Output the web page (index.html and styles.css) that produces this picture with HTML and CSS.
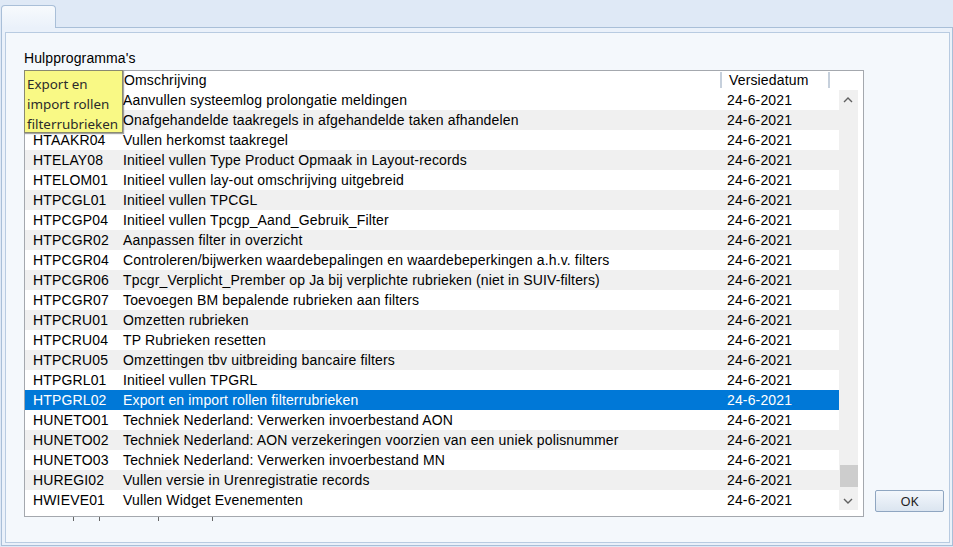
FILE: index.html
```html
<!DOCTYPE html>
<html>
<head>
<meta charset="utf-8">
<link rel="stylesheet" href="styles.css">
</head>
<body>
<div class="tabstrip"><div class="tab"></div></div>
<div class="frame">
  <div class="panel">
    <div class="label">Hulpprogramma's</div>
    <div class="content">
      <div class="gridwrap">
        <div class="grid">
          <div class="header">
            <div class="c-code"></div>
            <div class="c-desc h-desc">Omschrijving</div>
            <div class="c-date h-date">Versiedatum</div>
            <div class="h-rest"></div>
          </div>
          <div class="body">
            <div class="rows">
              <div class="row"><span class="c-code"></span><span class="c-desc">Aanvullen systeemlog prolongatie meldingen</span><span class="c-date">24-6-2021</span></div>
              <div class="row"><span class="c-code"></span><span class="c-desc">Onafgehandelde taakregels in afgehandelde taken afhandelen</span><span class="c-date">24-6-2021</span></div>
              <div class="row"><span class="c-code">HTAAKR04</span><span class="c-desc">Vullen herkomst taakregel</span><span class="c-date">24-6-2021</span></div>
              <div class="row"><span class="c-code">HTELAY08</span><span class="c-desc">Initieel vullen Type Product Opmaak in Layout-records</span><span class="c-date">24-6-2021</span></div>
              <div class="row"><span class="c-code">HTELOM01</span><span class="c-desc">Initieel vullen lay-out omschrijving uitgebreid</span><span class="c-date">24-6-2021</span></div>
              <div class="row"><span class="c-code">HTPCGL01</span><span class="c-desc">Initieel vullen TPCGL</span><span class="c-date">24-6-2021</span></div>
              <div class="row"><span class="c-code">HTPCGP04</span><span class="c-desc">Initieel vullen Tpcgp_Aand_Gebruik_Filter</span><span class="c-date">24-6-2021</span></div>
              <div class="row"><span class="c-code">HTPCGR02</span><span class="c-desc">Aanpassen filter in overzicht</span><span class="c-date">24-6-2021</span></div>
              <div class="row"><span class="c-code">HTPCGR04</span><span class="c-desc">Controleren/bijwerken waardebepalingen en waardebeperkingen a.h.v. filters</span><span class="c-date">24-6-2021</span></div>
              <div class="row"><span class="c-code">HTPCGR06</span><span class="c-desc">Tpcgr_Verplicht_Prember op Ja bij verplichte rubrieken (niet in SUIV-filters)</span><span class="c-date">24-6-2021</span></div>
              <div class="row"><span class="c-code">HTPCGR07</span><span class="c-desc">Toevoegen BM bepalende rubrieken aan filters</span><span class="c-date">24-6-2021</span></div>
              <div class="row"><span class="c-code">HTPCRU01</span><span class="c-desc">Omzetten rubrieken</span><span class="c-date">24-6-2021</span></div>
              <div class="row"><span class="c-code">HTPCRU04</span><span class="c-desc">TP Rubrieken resetten</span><span class="c-date">24-6-2021</span></div>
              <div class="row"><span class="c-code">HTPCRU05</span><span class="c-desc">Omzettingen tbv uitbreiding bancaire filters</span><span class="c-date">24-6-2021</span></div>
              <div class="row"><span class="c-code">HTPGRL01</span><span class="c-desc">Initieel vullen TPGRL</span><span class="c-date">24-6-2021</span></div>
              <div class="row selected"><span class="c-code">HTPGRL02</span><span class="c-desc">Export en import rollen filterrubrieken</span><span class="c-date">24-6-2021</span></div>
              <div class="row"><span class="c-code">HUNETO01</span><span class="c-desc">Techniek Nederland: Verwerken invoerbestand AON</span><span class="c-date">24-6-2021</span></div>
              <div class="row"><span class="c-code">HUNETO02</span><span class="c-desc">Techniek Nederland: AON verzekeringen voorzien van een uniek polisnummer</span><span class="c-date">24-6-2021</span></div>
              <div class="row"><span class="c-code">HUNETO03</span><span class="c-desc">Techniek Nederland: Verwerken invoerbestand MN</span><span class="c-date">24-6-2021</span></div>
              <div class="row"><span class="c-code">HUREGI02</span><span class="c-desc">Vullen versie in Urenregistratie records</span><span class="c-date">24-6-2021</span></div>
              <div class="row"><span class="c-code">HWIEVE01</span><span class="c-desc">Vullen Widget Evenementen</span><span class="c-date">24-6-2021</span></div>
            </div>
            <div class="scrollbar">
              <div class="arrow">
                <svg width="10" height="6" viewBox="0 0 10 6"><path d="M1 5 L5 1 L9 5" fill="none" stroke="#606060" stroke-width="1.4"/></svg>
              </div>
              <div class="track"><div class="thumb"></div></div>
              <div class="arrow">
                <svg width="10" height="6" viewBox="0 0 10 6"><path d="M1 1 L5 5 L9 1" fill="none" stroke="#606060" stroke-width="1.4"/></svg>
              </div>
            </div>
          </div>
        </div>
        <div class="ticks"><i class="t1"></i><i class="t2"></i><i class="t3"></i><i class="t4"></i></div>
        <div class="tooltip">Export en<br>import rollen<br>filterrubrieken</div>
      </div>
      <div class="side">
        <button class="ok">OK</button>
      </div>
    </div>
  </div>
</div>
</body>
</html>
```
FILE: styles.css
```css
html, body {
  margin: 0;
  padding: 0;
}
body {
  width: 953px;
  height: 547px;
  overflow: hidden;
  background: #dfe9f6;
  font-family: "Liberation Sans", Arial, sans-serif;
  font-size: 14px;
  color: #000;
}
.tabstrip {
  height: 27px;
  box-sizing: border-box;
  padding: 4px 0 0 1px;
  display: flex;
  align-items: flex-end;
}
.tab {
  position: relative;
  z-index: 1;
  width: 55px;
  height: 23px;
  box-sizing: border-box;
  border: 1px solid #a9bfd8;
  border-bottom: none;
  border-radius: 4px 4px 0 0;
  background: linear-gradient(#f7fafd, #eaf1fa);
  margin-bottom: -1px;
}
.frame {
  margin-left: 1px;
  width: 952px;
  height: 519px;
  box-sizing: border-box;
  border: 1px solid #a9bfd8;
  background: #eaf1fa;
  padding: 4px 2px 2px 3px;
}
.panel {
  height: 100%;
  box-sizing: border-box;
  border: 1px solid #b8cbe1;
  background: #f4f8fc;
  padding: 17px 0 0 18px;
}
.label {
  line-height: 16px;
  height: 16px;
  margin-bottom: 4px;
  color: #000;
  letter-spacing: 0.1px;
}
.content {
  display: flex;
  align-items: flex-end;
}
.gridwrap {
  position: relative;
  width: 840px;
}
.grid {
  width: 840px;
  height: 447px;
  box-sizing: border-box;
  border: 1px solid #a4a8ae;
  background: #fff;
  letter-spacing: 0.15px;
}
.header {
  display: flex;
  height: 19px;
  line-height: 19px;
  background: #fff;
}
.header .c-code { width: 94px; }
.h-desc { width: 596px; padding-left: 5px; }
.h-date {
  width: 99px;
  padding-left: 7px;
  border-left: 2px solid #c6d0dc;
  border-right: 2px solid #c6d0dc;
  margin: 1px 0 2px;
  line-height: 17px;
}
.body {
  display: flex;
  height: 420px;
}
.rows {
  width: 814px;
}
.row {
  display: flex;
  height: 20px;
  line-height: 21px;
  overflow: hidden;
  white-space: nowrap;
  background: #fff;
}
.row:nth-child(even) {
  background: #f0f0f0;
}
.row.selected {
  background: #0078d7;
  color: #fff;
}
.row .c-code { width: 86px; padding-left: 8px; flex: none; }
.row .c-desc { width: 597px; padding-left: 4px; overflow: hidden; flex: none; }
.row .c-date { padding-left: 7px; }
.scrollbar {
  width: 19px;
  display: flex;
  flex-direction: column;
  background: #f0f0f0;
}
.arrow {
  height: 19px;
  display: flex;
  align-items: center;
  justify-content: center;
  padding-right: 1px;
}
.track {
  flex: 1;
  display: flex;
  flex-direction: column;
  justify-content: flex-end;
  padding: 0 0 4px 1px;
}
.thumb {
  height: 22px;
  background: #cdcdcd;
}
.ticks {
  display: flex;
  height: 5px;
}
.ticks i {
  display: block;
  width: 1px;
  height: 4px;
  background: #666;
}
.ticks .t1 { margin-left: 49px; }
.ticks .t2 { margin-left: 25px; }
.ticks .t3 { margin-left: 58px; }
.ticks .t4 { margin-left: 53px; }
.tooltip {
  position: absolute;
  left: 0;
  top: 0;
  width: 99px;
  height: 63px;
  box-sizing: border-box;
  border: 1px solid #8a8a70;
  background: #f9f985;
  box-shadow: 1px 1px 1px rgba(0, 0, 0, 0.35);
  padding: 3px 0 0 2px;
  font-family: "Noto Sans", "Open Sans", sans-serif;
  font-size: 13.4px;
  line-height: 20px;
  color: #2b2b2b;
  white-space: nowrap;
}
.side {
  margin-left: 11px;
  padding-bottom: 10px;
}
.ok {
  display: block;
  width: 69px;
  height: 22px;
  box-sizing: border-box;
  border: 1px solid #8fa6c1;
  border-radius: 2px;
  background: linear-gradient(#f3f7fc, #dbe5f0);
  font-family: "Noto Sans", "Liberation Sans", sans-serif;
  font-size: 13px;
  color: #222;
  padding: 0;
}
```
